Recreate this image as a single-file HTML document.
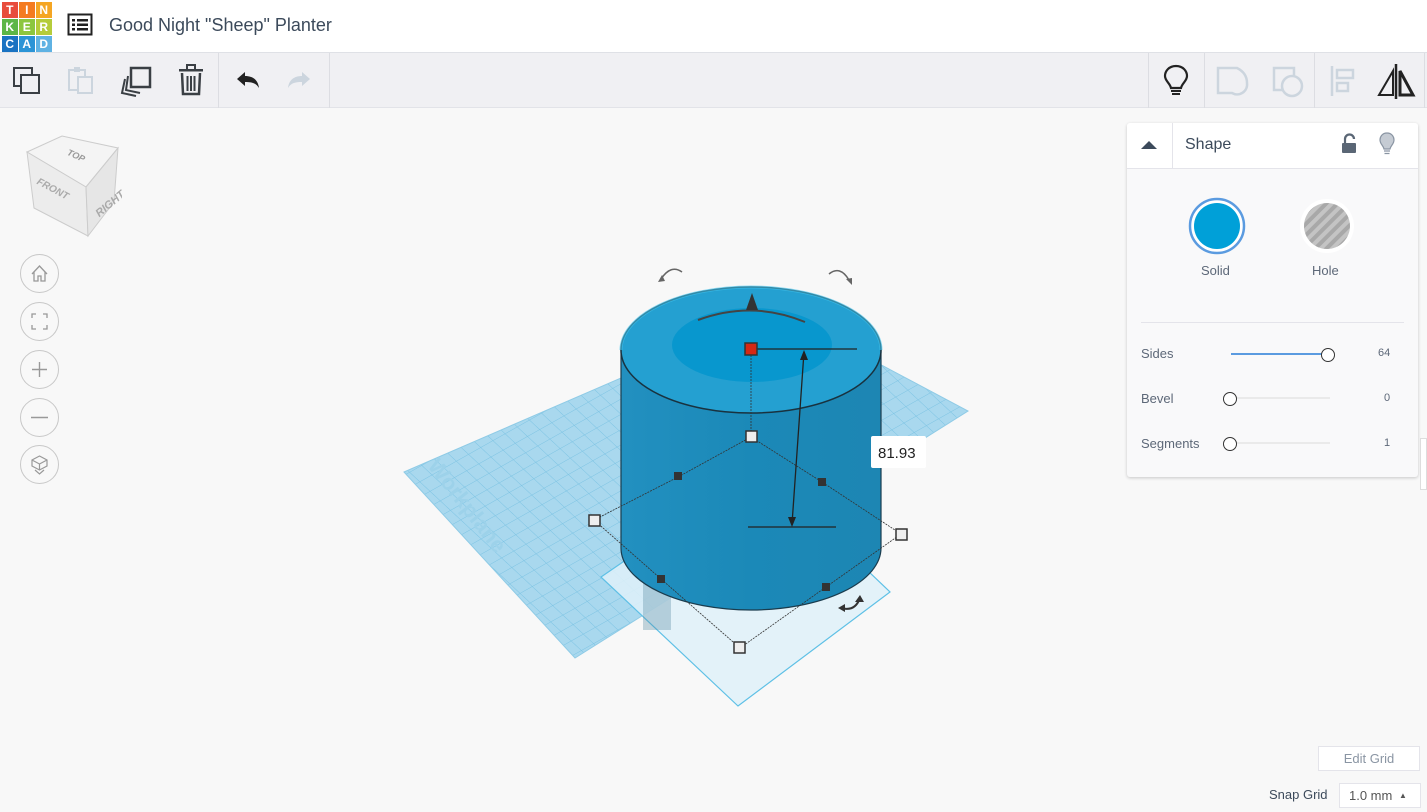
<!DOCTYPE html>
<html><head><meta charset="utf-8"><style>
*{margin:0;padding:0;box-sizing:border-box}
body{width:1427px;height:812px;overflow:hidden;background:#f8f8f8;font-family:"Liberation Sans",sans-serif;position:relative}
.hdr{position:absolute;left:0;top:0;width:1427px;height:53px;background:#fff;border-bottom:1px solid #dfe1e6}
.tb{position:absolute;left:0;top:53px;width:1427px;height:55px;background:#f0f0f3;border-bottom:1px solid #e2e3e8}
.logo{position:absolute;left:2px;top:2px;width:50px;height:50px}
.logo div{position:absolute;width:15.5px;height:15.5px;color:#fff;font-size:12px;font-weight:bold;text-align:center;line-height:16px}
.title{position:absolute;left:109px;top:15px;font-size:18px;color:#3c4a5b}
.sep{position:absolute;top:53px;width:1px;height:55px;background:#dcdde2}
.panel{position:absolute;left:1127px;top:123px;width:291px;height:354px;background:#f9f9fa;border-radius:3px;box-shadow:0 1px 3px rgba(0,0,0,.2)}
.ph{position:absolute;left:0;top:0;width:291px;height:46px;background:#fff;border-bottom:1px solid #e4e4ea;border-radius:3px 3px 0 0}
.lab{position:absolute;font-size:13px;color:#5d6878}
.circbtn{position:absolute;left:20px;width:39px;height:39px;border:1px solid #c8c8c8;border-radius:50%;background:#f8f8f8}
</style></head><body>
<div class="hdr">
<div class="logo">
<div style="left:0;top:0;background:#e84c3c">T</div><div style="left:17px;top:0;background:#f47b20">I</div><div style="left:34px;top:0;background:#f5a623">N</div>
<div style="left:0;top:17px;background:#5cb646">K</div><div style="left:17px;top:17px;background:#8cc63f">E</div><div style="left:34px;top:17px;background:#b5cc3b">R</div>
<div style="left:0;top:34px;background:#1a73c2">C</div><div style="left:17px;top:34px;background:#2b94d6">A</div><div style="left:34px;top:34px;background:#5fb2e3">D</div>
</div>
<svg style="position:absolute;left:67px;top:13px" width="26" height="24"><rect x="1.5" y="1.5" width="23" height="20" fill="none" stroke="#222" stroke-width="2"/><rect x="5" y="6" width="3" height="2.5" fill="#222"/><rect x="10" y="6" width="11" height="2.5" fill="#222"/><rect x="5" y="10.5" width="3" height="2.5" fill="#222"/><rect x="10" y="10.5" width="11" height="2.5" fill="#222"/><rect x="5" y="15" width="3" height="2.5" fill="#222"/><rect x="10" y="15" width="11" height="2.5" fill="#222"/></svg>
<div class="title">Good Night "Sheep" Planter</div>
</div>
<div class="tb">
<svg style="position:absolute;left:12px;top:13px" width="30" height="30"><rect x="2" y="2" width="18" height="18" fill="none" stroke="#3a3f44" stroke-width="2"/><rect x="9" y="9" width="18" height="18" fill="#f0f0f3" stroke="#3a3f44" stroke-width="2"/></svg>
<svg style="position:absolute;left:66px;top:12px" width="30" height="32"><rect x="3" y="5" width="16" height="20" fill="none" stroke="#ccd5de" stroke-width="2"/><rect x="8" y="2" width="6" height="5" fill="#ccd5de"/><rect x="12" y="12" width="14" height="16" fill="#f0f0f3" stroke="#ccd5de" stroke-width="2"/></svg>
<svg style="position:absolute;left:120px;top:12px" width="34" height="34"><path d="M5 14 L2 28 L16 31" fill="none" stroke="#3a3f44" stroke-width="2"/><path d="M8 11 L6 25 L20 28" fill="none" stroke="#3a3f44" stroke-width="2"/><rect x="11" y="3" width="19" height="19" fill="#f0f0f3" stroke="#3a3f44" stroke-width="2.5"/></svg>
<svg style="position:absolute;left:177px;top:11px" width="28" height="34"><rect x="2" y="5" width="24" height="2.5" fill="#3a3f44"/><rect x="10" y="1" width="8" height="5" fill="none" stroke="#3a3f44" stroke-width="2"/><path d="M5 9 L6 30 L22 30 L23 9" fill="none" stroke="#3a3f44" stroke-width="2.5"/><path d="M10.5 12V27M14 12V27M17.5 12V27" stroke="#3a3f44" stroke-width="2"/></svg>
<svg style="position:absolute;left:233px;top:17px" width="28" height="22"><path d="M4 9 L12 2 L12 6 C20 6 25 10 26 18 C23 13 19 12 12 12 L12 16 Z" fill="#222"/></svg>
<svg style="position:absolute;left:286px;top:17px" width="28" height="22"><path d="M24 9 L16 2 L16 6 C8 6 3 10 2 18 C5 13 9 12 16 12 L16 16 Z" fill="#ccd5de"/></svg>
<svg style="position:absolute;left:1162px;top:10px" width="28" height="36"><path d="M14 3 C7 3 3 8 3 13 C3 18 8 20 9 25 L19 25 C20 20 25 18 25 13 C25 8 21 3 14 3 Z" fill="none" stroke="#222" stroke-width="2.2"/><path d="M9 28H19M10 31H18" stroke="#222" stroke-width="2"/></svg>
<svg style="position:absolute;left:1215px;top:12px" width="36" height="34"><path d="M3 3 H22 C28 6 32 11 32 18 A10 10 0 0 1 17 28 H3 Z" fill="none" stroke="#ccd5de" stroke-width="2.5"/></svg>
<svg style="position:absolute;left:1271px;top:12px" width="36" height="34"><rect x="3" y="3" width="20" height="22" fill="none" stroke="#ccd5de" stroke-width="2.5"/><circle cx="21" cy="21" r="10" fill="#f0f0f3" stroke="#ccd5de" stroke-width="2.5"/></svg>
<svg style="position:absolute;left:1328px;top:12px" width="30" height="32"><path d="M4 1V31" stroke="#ccd5de" stroke-width="2.5"/><rect x="9" y="5" width="16" height="8" fill="none" stroke="#ccd5de" stroke-width="2.5"/><rect x="9" y="18" width="11" height="8" fill="none" stroke="#ccd5de" stroke-width="2.5"/></svg>
<svg style="position:absolute;left:1376px;top:9px" width="40" height="38"><path d="M17 9 L3 33 H17 Z" fill="none" stroke="#222" stroke-width="2"/><path d="M20 2V37" stroke="#222" stroke-width="2.5"/><path d="M24 9 L37 33 H24 Z" fill="none" stroke="#222" stroke-width="3"/></svg>
</div>
<div class="sep" style="left:218px"></div><div class="sep" style="left:329px"></div>
<div class="sep" style="left:1148px"></div><div class="sep" style="left:1204px"></div><div class="sep" style="left:1314px"></div><div class="sep" style="left:1424px"></div>

<svg style="position:absolute;left:22px;top:132px" width="100" height="108">
<path d="M5 20 L40 4 L96 16 L64 55 Z" fill="#f4f4f4" stroke="#ccc"/>
<path d="M5 20 L64 55 L66 104 L12 76 Z" fill="#ececec" stroke="#ccc"/>
<path d="M64 55 L96 16 L92 70 L66 104 Z" fill="#e6e6e6" stroke="#ccc"/>
<text x="44" y="25" font-size="9" fill="#999" font-style="italic" font-weight="bold" transform="rotate(25 50 25)">TOP</text>
<text x="12" y="60" font-size="10" fill="#aaa" font-style="italic" font-weight="bold" transform="rotate(28 30 60)">FRONT</text>
<text x="68" y="80" font-size="11" fill="#aaa" font-style="italic" font-weight="bold" transform="rotate(-40 80 70)">RIGHT</text>
</svg>
<div class="circbtn" style="top:254px"><svg width="37" height="37"><path d="M11 19 L18.5 11 L26 19 M13 17V26H17V21H20V26H24V17" fill="none" stroke="#999" stroke-width="1.3"/></svg></div>
<div class="circbtn" style="top:302px"><svg width="37" height="37"><path d="M11 15V11H15M22 11H26V15M26 22V26H22M15 26H11V22" fill="none" stroke="#999" stroke-width="1.3"/></svg></div>
<div class="circbtn" style="top:350px"><svg width="37" height="37"><path d="M18.5 11V26M11 18.5H26" stroke="#999" stroke-width="1.4"/></svg></div>
<div class="circbtn" style="top:398px"><svg width="37" height="37"><path d="M10 18.5H27" stroke="#999" stroke-width="1.4"/></svg></div>
<div class="circbtn" style="top:445px"><svg width="37" height="37"><path d="M18.5 10 L26 14 L26 20 L18.5 24 L11 20 L11 14 Z M11 14 L18.5 18 L26 14 M18.5 18V24 M14 24 L18.5 28 L23 24" fill="none" stroke="#999" stroke-width="1.2"/></svg></div>

<svg style="position:absolute;left:0;top:0" width="1427" height="812">
<defs>
<pattern id="g" width="14" height="14" patternUnits="userSpaceOnUse" patternTransform="matrix(0.87 -0.49 0.73 0.68 0 0)"><rect width="14" height="14" fill="#a9d8ee"/><path d="M0 0H14M0 0V14" stroke="#7cc3e3" stroke-width="1"/></pattern>
<linearGradient id="side" x1="0" x2="1"><stop offset="0" stop-color="#2290c0"/><stop offset=".5" stop-color="#1b89b8"/><stop offset="1" stop-color="#1d86b3"/></linearGradient>
</defs>
<path d="M404 472 L778 310 L968 411 L575 658 Z" fill="url(#g)" stroke="#8fcbe6"/>
<path d="M601 577 L760 468 L890 592 L738 706 Z" fill="#dff1f9" fill-opacity=".85" stroke="#5ec0e6" stroke-width="1.2"/>
<text x="425" y="470" font-size="22" font-weight="bold" fill="#9dd2ea" transform="rotate(52 430 470)">Workplane</text>
<rect x="643" y="580" width="28" height="50" fill="#5a8da3" opacity=".35"/>
<path d="M621 350 V548 A130 62 0 0 0 881 548 V350 Z" fill="url(#side)" stroke="#1a3c4e" stroke-width="1.2"/>
<ellipse cx="751" cy="350" rx="130" ry="63" fill="#24a0d1" stroke="#19323f" stroke-width="1.5"/>
<path d="M621 350 A130 63 0 0 1 881 350" fill="none" stroke="#43c4ee" stroke-width="3" opacity=".6"/>
<ellipse cx="752" cy="345" rx="80" ry="37" fill="#0897ce"/>
<path d="M698 320 Q752 300 805 322" fill="none" stroke="#444" stroke-width="2"/>
<path d="M752 293 L746 310 L758 310 Z" fill="#333"/>
<path d="M751 349 V437 M751 437 L678 477 M751 437 L822 482" stroke="#333" stroke-width=".8" stroke-dasharray="2 1"/>
<path d="M594 520 L661 579 L740 648 L826 587 L901 534 L822 482 M594 520 L678 477" fill="none" stroke="#333" stroke-width=".8" stroke-dasharray="2 1"/>
<path d="M751 349 H857 M748 527 H836 M804 352 L792 524" stroke="#222" stroke-width="1.3"/>
<path d="M804 350 L800 360 L808 360 Z M792 527 L788 517 L796 517 Z" fill="#222"/>
<rect x="745" y="343" width="12" height="12" fill="#d42815" stroke="#333" stroke-width="1.5"/>
<rect x="746" y="431" width="11" height="11" fill="#eee" stroke="#333" stroke-width="1.5"/>
<rect x="589" y="515" width="11" height="11" fill="#eee" stroke="#333" stroke-width="1.5"/>
<rect x="896" y="529" width="11" height="11" fill="#eee" stroke="#333" stroke-width="1.5"/>
<rect x="734" y="642" width="11" height="11" fill="#eee" stroke="#333" stroke-width="1.5"/>
<rect x="674" y="472" width="8" height="8" fill="#333"/><rect x="818" y="478" width="8" height="8" fill="#333"/>
<rect x="657" y="575" width="8" height="8" fill="#333"/><rect x="822" y="583" width="8" height="8" fill="#333"/>
<path d="M661 279 Q671 264 682 272" fill="none" stroke="#666" stroke-width="1.5"/><path d="M658 282 L662 275 L665 281 Z" fill="#666"/>
<path d="M829 274 Q840 265 849 280" fill="none" stroke="#666" stroke-width="1.5"/><path d="M852 285 L846 279 L852 278 Z" fill="#666"/>
<path d="M841 608 Q855 612 860 598" fill="none" stroke="#333" stroke-width="2"/><path d="M860 595 L855 602 L864 602 Z M838 608 L845 604 L845 612 Z" fill="#333"/>
<rect x="871" y="436" width="55" height="32" rx="2" fill="#fff"/>
<text x="878" y="458" font-size="15" fill="#222">81.93</text>
</svg>

<div class="panel">
<div class="ph">
<svg style="position:absolute;left:13px;top:16px" width="18" height="12"><path d="M1 10 L9 2 L17 10 Z" fill="#3c4a5b"/></svg>
<div style="position:absolute;left:45px;top:0;width:1px;height:46px;background:#e4e4ea"></div>
<div style="position:absolute;left:58px;top:13px;font-size:16px;color:#3c4a5b">Shape</div>
<svg style="position:absolute;left:213px;top:10px" width="18" height="22"><path d="M5 10 V6 A4.5 4.5 0 0 1 14 6" fill="none" stroke="#5a6675" stroke-width="2.2"/><rect x="2" y="10" width="14" height="10" rx="1" fill="#5a6675"/></svg>
<svg style="position:absolute;left:251px;top:8px" width="18" height="26"><path d="M9 2 C4 2 2 6 2 9 C2 13 5 14 6 18 H12 C13 14 16 13 16 9 C16 6 14 2 9 2 Z" fill="#c5cbd3" stroke="#8a95a3" stroke-width="1.2"/><path d="M6 20H12M6.5 22.5H11.5" stroke="#8a95a3" stroke-width="1.3"/></svg>
</div>
<svg style="position:absolute;left:60px;top:73px" width="60" height="60"><circle cx="30" cy="30" r="27" fill="#fff" stroke="#5b9be0" stroke-width="2.5"/><circle cx="30" cy="30" r="23" fill="#00a0d8"/></svg>
<svg style="position:absolute;left:170px;top:73px" width="60" height="60"><defs><pattern id="h" width="8" height="8" patternUnits="userSpaceOnUse" patternTransform="rotate(45)"><rect width="8" height="8" fill="#c4c4c4"/><rect width="4" height="8" fill="#a8a8a8"/></pattern></defs><circle cx="30" cy="30" r="27" fill="#fff"/><circle cx="30" cy="30" r="23" fill="url(#h)"/></svg>
<div class="lab" style="left:74px;top:140px">Solid</div>
<div class="lab" style="left:185px;top:140px">Hole</div>
<div style="position:absolute;left:14px;top:199px;width:263px;height:1px;background:#e4e4ea"></div>
<div class="lab" style="left:14px;top:223px">Sides</div>
<div class="lab" style="left:14px;top:268px">Bevel</div>
<div class="lab" style="left:14px;top:313px">Segments</div>
<div style="position:absolute;left:104px;top:230px;width:92px;height:2px;background:#5b9be0"></div>
<div style="position:absolute;left:103px;top:274px;width:100px;height:2px;background:#eaeaea"></div>
<div style="position:absolute;left:103px;top:319px;width:100px;height:2px;background:#eaeaea"></div>
<div style="position:absolute;left:194px;top:225px;width:14px;height:14px;border:1.5px solid #333;border-radius:50%;background:#fff"></div>
<div style="position:absolute;left:96px;top:269px;width:14px;height:14px;border:1.5px solid #333;border-radius:50%;background:#fff"></div>
<div style="position:absolute;left:96px;top:314px;width:14px;height:14px;border:1.5px solid #333;border-radius:50%;background:#fff"></div>
<div class="lab" style="left:251px;top:224px;font-size:11px">64</div>
<div class="lab" style="left:257px;top:269px;font-size:11px">0</div>
<div class="lab" style="left:257px;top:314px;font-size:11px">1</div>
</div>
<div style="position:absolute;left:1420px;top:438px;width:7px;height:52px;background:#fff;border:1px solid #ddd"></div>

<div style="position:absolute;left:1318px;top:746px;width:102px;height:25px;background:#fff;border:1px solid #e4e4ea;font-size:13px;color:#8a95a3;text-align:center;line-height:24px">Edit Grid</div>
<div style="position:absolute;left:1269px;top:787px;font-size:13px;color:#3c4a5b">Snap Grid</div>
<div style="position:absolute;left:1339px;top:783px;width:82px;height:25px;background:#fff;border:1px solid #e4e4ea;font-size:13px;color:#555;line-height:24px;padding-left:9px">1.0 mm <span style="font-size:8px;position:relative;top:-2px;margin-left:3px">▲</span></div>
</body></html>
